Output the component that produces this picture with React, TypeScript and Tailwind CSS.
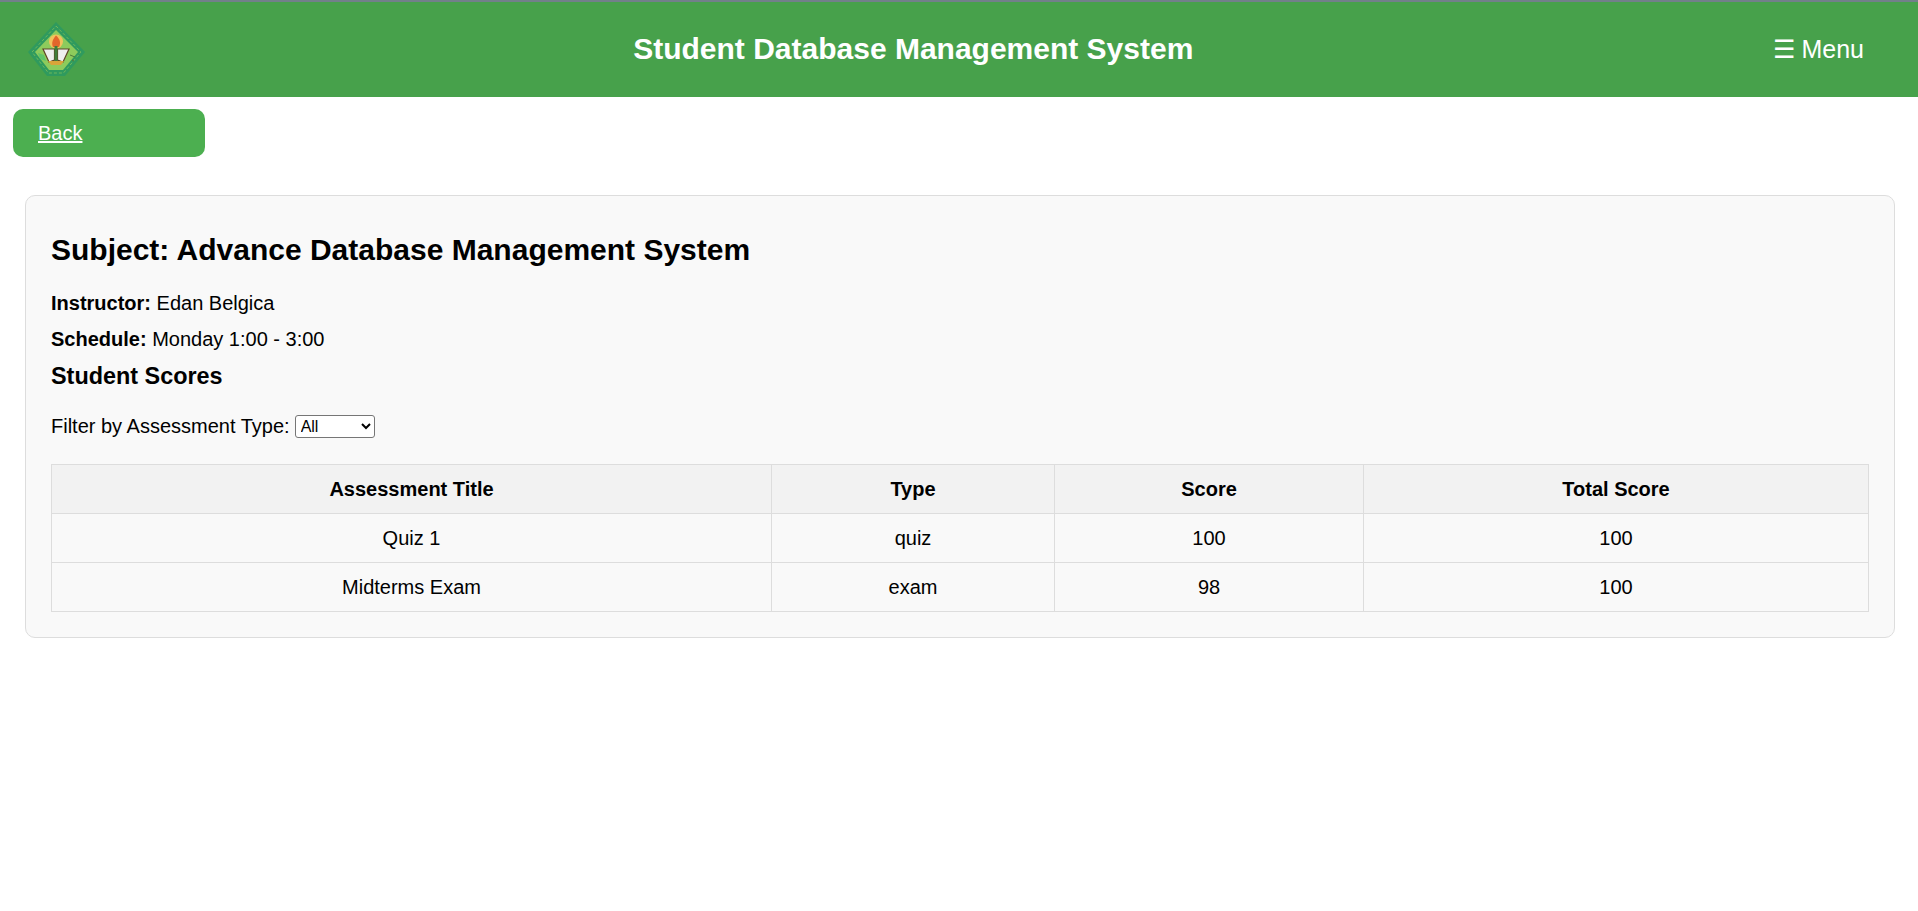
import React from "react";

const rows = [
  { title: "Quiz 1", type: "quiz", score: 100, total: 100 },
  { title: "Midterms Exam", type: "exam", score: 98, total: 100 },
];

const Logo = () => (
  <svg viewBox="0 0 60 58" className="w-[60px] h-[58px]">
    {/* emblem: coordinates are px offsets from the logo corner */}
    <path d="M29 1 L58 31 L38 55 L20 55 L1 31 Z" fill="#2f9a5e" />
    <path d="M29 5 L54 31 L36.500 52 L21.500 52 L5 31 Z" fill="none" stroke="#6fb85a" strokeWidth="1" strokeDasharray="3 2" />
    <path d="M29 9 L51 31 L36 49 L22 49 L8 31 Z" fill="#8dcb5c" />
    <circle cx="29" cy="20.500" r="7" fill="#f2c25c" />
    <path d="M29 14.500 C33 18 34 22 32 26 L26 26 C24 22 26 18 29 14.500 Z" fill="#e3662b" />
    <path d="M16 28 L27.500 28 L27.500 39 L22 41 Z" fill="#efefef" stroke="#5f4526" strokeWidth="1.200" />
    <path d="M42 28 L30.500 28 L30.500 39 L36 41 Z" fill="#efefef" stroke="#5f4526" strokeWidth="1.200" />
    <rect x="27.500" y="25" width="3" height="15" fill="#3f7d3a" />
    <path d="M21 40 L37 40 L34 44 L24 44 Z" fill="#d9a53a" />
    <path d="M11 32 L17 34 L19 40 L13 38 Z" fill="#5fc46a" />
    <path d="M43 34 L48 36 M45 39 L47 40" stroke="#4c7a3a" strokeWidth="1" />
  </svg>
);

export default function App() {
  return (
    <div className="min-h-[911px] bg-white text-black font-['Liberation_Sans',Arial,sans-serif]">
      <header className="h-[97px] bg-[#47a14b] border-t-2 border-[#72808a] flex items-center justify-between pl-[27px] pr-[54px]">
        <Logo />
        <h1 className="text-[30px] font-bold text-white mr-[33px] mb-[2px]">Student Database Management System</h1>
        <button className="text-[25px] text-white">☰ Menu</button>
      </header>

      <div className="pt-3 pl-[13px]">
        <a href="#" className="block w-[192px] h-[48px] leading-[48px] pl-[25px] rounded-[10px] bg-[#4caf50] text-white text-[20px] underline">
          Back
        </a>
      </div>

      <main className="mt-[38px] ml-[25px] mr-[23px] pt-[37px] px-[25px] pb-[25px] rounded-[10px] border border-[#dddddd] bg-[#f9f9f9]">
        <h2 className="text-[30px] font-bold leading-[34px] mb-[25px]">Subject: Advance Database Management System</h2>
        <p className="text-[20px] leading-[23px] mb-[13px]">
          <strong>Instructor:</strong> Edan Belgica
        </p>
        <p className="text-[20px] leading-[23px] mb-[12px]">
          <strong>Schedule:</strong> Monday 1:00 - 3:00
        </p>
        <h3 className="text-[23.400px] font-bold leading-[27px] mb-[25px]">Student Scores</h3>
        <div className="flex items-center text-[20px] leading-[23px] mb-[26px]">
          <label htmlFor="type">Filter by Assessment Type:</label>
          <select id="type" className="ml-[5px] pl-px w-[80px] h-[23px] text-[16px] bg-white border border-[#767676] rounded-[3px]">
            <option>All</option>
          </select>
        </div>
        <table className="w-full border-collapse table-fixed text-[20px] text-center">
          <colgroup>
            <col className="w-[720px]" />
            <col className="w-[283px]" />
            <col className="w-[309px]" />
            <col />
          </colgroup>
          <thead>
            <tr className="bg-[#f2f2f2]">
              <th className="border border-[#dddddd] h-[49px] font-bold">Assessment Title</th>
              <th className="border border-[#dddddd] font-bold">Type</th>
              <th className="border border-[#dddddd] font-bold">Score</th>
              <th className="border border-[#dddddd] font-bold">Total Score</th>
            </tr>
          </thead>
          <tbody>
            {rows.map((row) => (
              <tr key={row.title}>
                <td className="border border-[#dddddd] h-[49px]">{row.title}</td>
                <td className="border border-[#dddddd]">{row.type}</td>
                <td className="border border-[#dddddd]">{row.score}</td>
                <td className="border border-[#dddddd]">{row.total}</td>
              </tr>
            ))}
          </tbody>
        </table>
      </main>
    </div>
  );
}
